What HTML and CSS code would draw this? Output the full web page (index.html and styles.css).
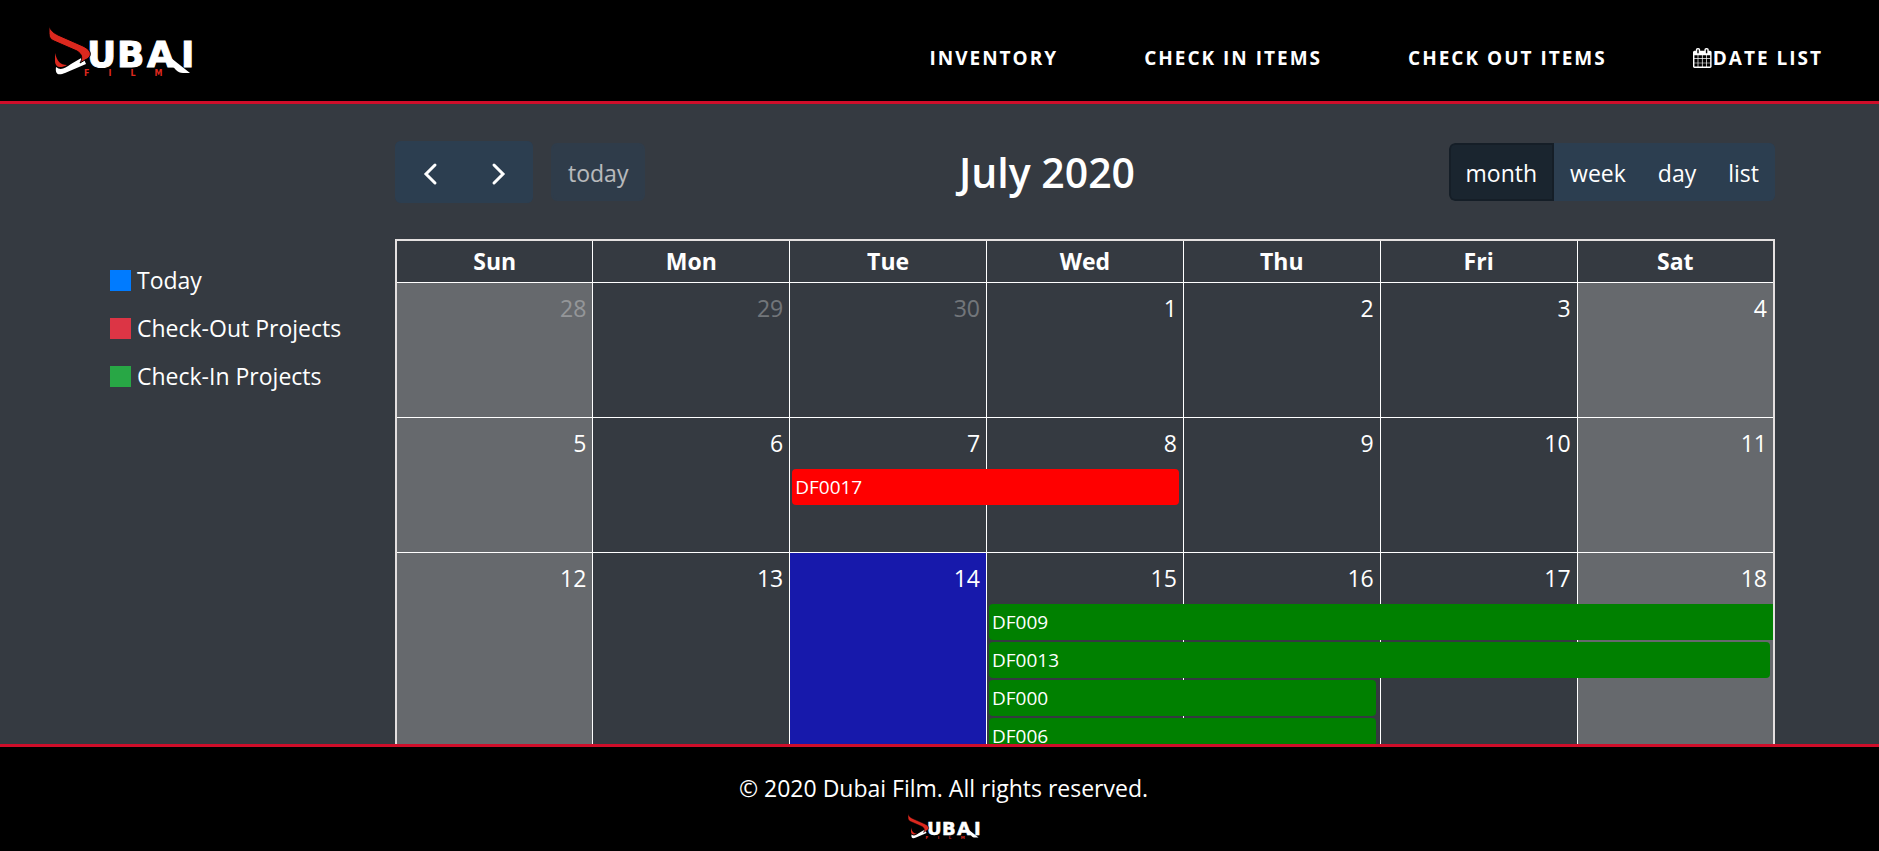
FILE: index.html
```html
<!DOCTYPE html>
<html lang="en">
<head>
<meta charset="utf-8">
<title>Dubai Film</title>
<link rel="stylesheet" href="styles.css">
</head>
<body>
<svg class="sprite" aria-hidden="true">
  <symbol id="logo" viewBox="0 0 144 52" overflow="visible">
    <text class="logo-name" x="38 68 98 132" y="41">UBAI</text>
    <path fill="#fff" d="M116 32H122L141 47H134C131 47 129 46 127 44Z"/>
    <path fill="#fff" d="M7 41C12 45 16 42 22 38L34 31L37 38L16 47C9 50 6 48 7 41Z"/>
    <path fill="#dc281e" stroke="#000" stroke-width="1" d="M0 0C2 5 5 7 9 9L34 20C44 25 43 31 36 34L31 37C34 32 33 28 28 25L5 15C1 13 0 11 0 6Z"/>
    <path fill="#dc281e" d="M6 27C8 35 11 39 18 39C11 43 6 41 6 35Z"/>
    <text class="logo-sub" x="35" y="50">FILM</text>
  </symbol>
</svg>

<header class="site-header">
  <a class="brand" href="#" aria-label="Dubai Film"><svg class="logo"><use href="#logo"/></svg></a>
  <nav class="nav">
    <a href="#">Inventory</a>
    <a href="#">Check In Items</a>
    <a href="#">Check Out Items</a>
    <a href="#"><svg class="nav-icon" viewBox="64 0 1664 1792" aria-hidden="true"><path fill="currentColor" d="M128 1664h288v-288h-288v288zm352 0h320v-288h-320v288zm-352-352h288v-320h-288v320zm352 0h320v-320h-320v320zm-352-384h288v-288h-288v288zm736 736h320v-288h-320v288zm-384-736h320v-288h-320v288zm768 736h288v-288h-288v288zm-384-352h320v-320h-320v320zm-352-864v-288q0-13-9.500-22.500t-22.500-9.500h-64q-13 0-22.500 9.500t-9.500 22.500v288q0 13 9.500 22.500t22.500 9.500h64q13 0 22.500-9.500t9.500-22.500zm736 864h288v-320h-288v320zm-384-384h320v-288h-320v288zm384 0h288v-288h-288v288zm32-480v-288q0-13-9.500-22.500t-22.500-9.500h-64q-13 0-22.500 9.500t-9.500 22.500v288q0 13 9.500 22.500t22.500 9.500h64q13 0 22.500-9.500t9.500-22.500zm384-64v1280q0 52-38 90t-90 38h-1408q-52 0-90-38t-38-90v-1280q0-52 38-90t90-38h128v-96q0-66 47-113t113-47h64q66 0 113 47t47 113v96h384v-96q0-66 47-113t113-47h64q66 0 113 47t47 113v96h128q52 0 90 38t38 90z"/></svg>Date List</a>
  </nav>
</header>

<main class="content">
  <ul class="legend">
    <li><span class="swatch swatch-today"></span>Today</li>
    <li><span class="swatch swatch-out"></span>Check-Out Projects</li>
    <li><span class="swatch swatch-in"></span>Check-In Projects</li>
  </ul>

  <section class="calendar">
    <div class="toolbar">
      <div class="toolbar-side">
        <div class="group">
          <button class="btn btn-arrow" type="button" aria-label="Previous"><svg viewBox="0 0 16 24"><path d="M13 3L4 12L13 21"/></svg></button>
          <button class="btn btn-arrow" type="button" aria-label="Next"><svg viewBox="0 0 16 24"><path d="M3 3L12 12L3 21"/></svg></button>
        </div>
        <button class="btn btn-today" type="button" disabled>today</button>
      </div>
      <h2 class="title">July 2020</h2>
      <div class="group">
        <button class="btn active" type="button">month</button>
        <button class="btn" type="button">week</button>
        <button class="btn" type="button">day</button>
        <button class="btn" type="button">list</button>
      </div>
    </div>

    <table class="grid">
      <thead>
        <tr><th>Sun</th><th>Mon</th><th>Tue</th><th>Wed</th><th>Thu</th><th>Fri</th><th>Sat</th></tr>
      </thead>
      <tbody>
        <tr>
          <td class="weekend other"><div class="day">28</div></td>
          <td class="other"><div class="day">29</div></td>
          <td class="other"><div class="day">30</div></td>
          <td><div class="day">1</div></td>
          <td><div class="day">2</div></td>
          <td><div class="day">3</div></td>
          <td class="weekend"><div class="day">4</div></td>
        </tr>
        <tr>
          <td class="weekend"><div class="day">5</div></td>
          <td><div class="day">6</div></td>
          <td><div class="day">7</div><a class="event out span-2" href="#">DF0017</a></td>
          <td><div class="day">8</div></td>
          <td><div class="day">9</div></td>
          <td><div class="day">10</div></td>
          <td class="weekend"><div class="day">11</div></td>
        </tr>
        <tr>
          <td class="weekend"><div class="day">12</div></td>
          <td><div class="day">13</div></td>
          <td class="today"><div class="day">14</div></td>
          <td>
            <div class="day">15</div>
            <a class="event in span-4 continues" href="#">DF009</a>
            <a class="event in span-4" href="#">DF0013</a>
            <a class="event in span-2" href="#">DF000</a>
            <a class="event in span-2" href="#">DF006</a>
          </td>
          <td><div class="day">16</div></td>
          <td><div class="day">17</div></td>
          <td class="weekend"><div class="day">18</div></td>
        </tr>
      </tbody>
    </table>
  </section>
</main>

<footer class="site-footer">
  <p>© 2020 Dubai Film. All rights reserved.</p>
  <svg class="logo logo-small" role="img" aria-label="Dubai Film"><use href="#logo"/></svg>
</footer>
</body>
</html>
```

FILE: styles.css
```css
* { box-sizing: border-box; }

body {
  margin: 0;
  height: 100vh;
  display: flex;
  flex-direction: column;
  overflow: hidden;
  background: #353a41;
  color: #fff;
  font-family: "Open Sans", "Noto Sans", sans-serif;
  font-size: 23px;
  line-height: 36px;
}

a { color: inherit; text-decoration: none; }

.sprite { position: absolute; width: 0; height: 0; }

/* Header */
.site-header {
  display: flex;
  align-items: center;
  justify-content: space-between;
  padding: 26px 56px 23px 49px;
  background: #000;
  border-bottom: 3px solid #cf0e2a;
}
.brand { display: flex; }
.logo { display: block; width: 144px; height: 52px; overflow: visible; }
.logo-name {
  fill: #fff;
  stroke: #fff;
  stroke-width: 1px;
  font: bold 36px "DejaVu Sans", sans-serif;
}
.logo-sub {
  fill: #dc281e;
  font: bold 8px "DejaVu Sans", sans-serif;
  letter-spacing: 19px;
}
.nav {
  display: flex;
  gap: 86px;
  padding-top: 12px;
  font-size: 19px;
  font-weight: 700;
  letter-spacing: 2px;
  text-transform: uppercase;
}
.nav a { display: flex; align-items: center; }
.nav-icon { width: 20px; height: 20px; }

/* Page body */
.content {
  flex: 1;
  min-height: 0;
  overflow: hidden;
  display: grid;
  grid-template-columns: 291px minmax(0, 1fr);
  padding: 37px 104px 0;
}

.legend {
  display: flex;
  flex-direction: column;
  gap: 12px;
  margin: 0;
  padding: 121px 0 0 6px;
  list-style: none;
}
.legend li { display: flex; align-items: center; gap: 6px; }
.swatch { width: 21px; height: 21px; }
.swatch-today { background: #007bff; }
.swatch-out { background: #dc3545; }
.swatch-in { background: #28a745; }

/* Toolbar */
.toolbar {
  display: flex;
  align-items: center;
  justify-content: space-between;
  margin-bottom: 36px;
}
.toolbar-side { display: flex; align-items: center; gap: 18px; }
.group {
  display: flex;
  border-radius: 6px;
  overflow: hidden;
}
.btn {
  height: 58px;
  padding: 1px 15px 0;
  border: 2px solid #2c3e50;
  background: #2c3e50;
  color: #fff;
  font: inherit;
}
.btn + .btn { padding: 1px 14px 0; }
.btn.active { background: #1a252f; border-color: #151e27; border-radius: 6px 0 0 6px; }
.btn-today { border-radius: 6px; opacity: 0.65; }
.btn.btn-arrow {
  display: flex;
  align-items: center;
  justify-content: center;
  width: 69px;
  height: 62px;
  padding: 4px 0 0;
}
.btn-arrow svg {
  width: 16px;
  height: 24px;
  fill: none;
  stroke: #fff;
  stroke-width: 3;
  stroke-linecap: round;
}
.title { margin: 0; font-size: 41px; font-weight: 600; }

/* Month grid */
.grid {
  width: 100%;
  table-layout: fixed;
  border-collapse: collapse;
  border: 2px solid #e4e0e0;
}
.grid th, .grid td { border: 1px solid #fff; padding: 0; }
.grid th { height: 42px; font-weight: 700; line-height: 40px; }
.grid td { height: 135px; vertical-align: top; }
.grid .weekend { background: #66696d; }
.grid .today { background: #1719ab; }
.day { padding: 7px 6px 8px; text-align: right; }
.other .day { opacity: 0.3; }

.event {
  position: relative;
  z-index: 1;
  display: block;
  height: 36px;
  margin: 0 0 2px 2px;
  padding-left: 3px;
  border-radius: 4px;
  font-size: 19px;
}
.event.out { background: #f00; }
.event.in { background: #008000; }
.span-2 { width: calc(200% - 5px); }
.span-4 { width: calc(400% - 2px); }
.span-4.continues { width: calc(400% + 1px); border-radius: 4px 0 0 4px; }

/* Footer */
.site-footer {
  display: flex;
  flex-direction: column;
  align-items: center;
  gap: 8px;
  padding: 23px 0 11px 8px;
  background: #000;
  border-top: 3px solid #cf0e2a;
}
.site-footer p { margin: 0; }
.logo-small { width: 72px; height: 26px; }
```
